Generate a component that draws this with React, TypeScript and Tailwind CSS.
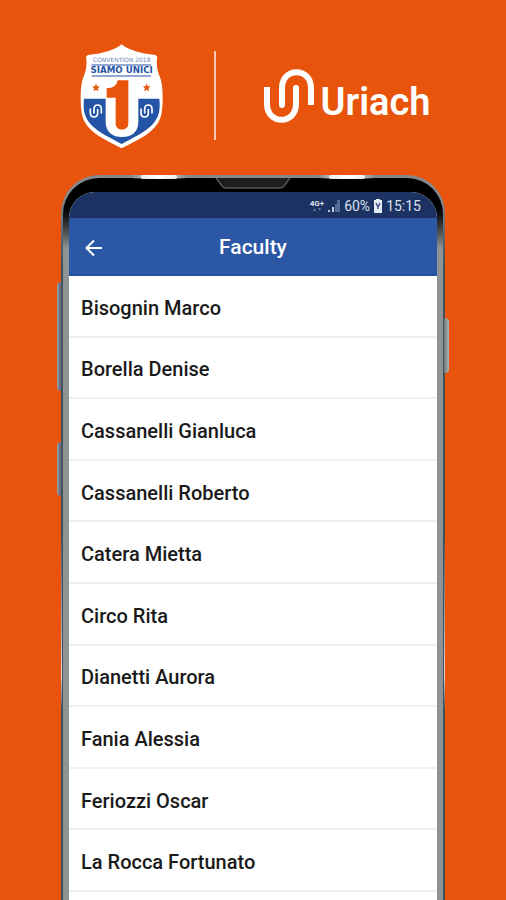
import React from 'react';

const faculty = [
  'Bisognin Marco',
  'Borella Denise',
  'Cassanelli Gianluca',
  'Cassanelli Roberto',
  'Catera Mietta',
  'Circo Rita',
  'Dianetti Aurora',
  'Fania Alessia',
  'Feriozzi Oscar',
  'La Rocca Fortunato',
];

function ConventionShield() {
  return (
    <svg width="84" height="105" viewBox="33 22 252 315" role="img" aria-label="Convention 2018 Siamo Unici">
      {/* White outline */}
      <path
        d="M158 26 C176 42 212 54 260 58 L265 64 C260 88 266 108 275 130 C283 156 282 206 278 232 C268 288 214 308 158 338 C102 308 48 288 38 232 C34 206 33 156 41 130 C50 108 56 88 51 64 L56 58 C104 54 140 42 158 26 Z"
        fill="#fff"
      />
      {/* Blue lower half */}
      <path d="M45 189 H271 C273 206 272 220 270 230 C260 276 212 296 158 325 C104 296 56 276 46 230 C44 220 43 206 45 189 Z" fill="#2454a6" />
      {/* White U around the number */}
      <path d="M110 186 V258 C110 290 132 304 159 304 C186 304 208 290 208 258 V186 Z" fill="#fff" />
      <path d="M146 134 H178 V264 C178 287 140 287 140 264 V186 H113 V158 C132 158 143 150 146 134 Z" fill="#e9540d" />
      <text x="158" y="79" textAnchor="middle" fontSize="18" fontFamily="DejaVu Sans, sans-serif" fill="#7186b5">CONVENTION 2018</text>
      <text x="158" y="112" textAnchor="middle" fontSize="26" fontWeight="700" fontFamily="DejaVu Sans, sans-serif" fill="#2454a6">SIAMO UNICI</text>
      <path d="M68 88 H246 M68 121 H246" stroke="#6f8cc2" strokeWidth="4" />
      <path d="M81 143 L84 152 L93 152 L86 158 L89 167 L81 162 L73 167 L76 158 L69 152 L78 152 Z" fill="#e9540d" />
      <path d="M233 143 L236 152 L245 152 L238 158 L241 167 L233 162 L225 167 L228 158 L221 152 L230 152 Z" fill="#e9540d" />
      <g fill="none" stroke="#fff" strokeWidth="5" strokeLinecap="round">
        <path d="M64 220 V232 C64 248 86 248 86 232 V222 M75 232 V220 C75 204 97 204 97 220 V232" />
        <path d="M216 220 V232 C216 248 238 248 238 232 V222 M227 232 V220 C227 204 249 204 249 220 V232" />
      </g>
    </svg>
  );
}

function UriachLogo() {
  return (
    <div className="flex items-center gap-[6px] text-white">
      <svg width="51" height="54" viewBox="0 0 51 54" fill="none" stroke="#fff" strokeWidth="6" aria-hidden="true">
        <path d="M3 18 V35 C3 56 32 56 32 35 V20" />
        <path d="M32 20 V19" strokeLinecap="round" />
        <path d="M18 36 V19 C18 -2 47 -2 47 19 V36" />
        <path d="M18 34 V36" strokeLinecap="round" />
      </svg>
      <span className="pt-3 text-[38px] leading-[46px] font-semibold">Uriach</span>
    </div>
  );
}

function StatusBar() {
  return (
    <div className="flex h-[26px] items-center justify-end gap-[3px] bg-[#1b3263] pt-[2px] pr-4 text-sm text-[#dbe1ec]">
      <div className="flex flex-col items-center text-[8px] leading-[8px] font-bold">
        4G+
        <svg width="8" height="4" viewBox="0 0 8 4" fill="#66799f" aria-hidden="true">
          <path d="M0 3 L1.5 0 L3 3 Z M5 0 H8 L6.5 3 Z" />
        </svg>
      </div>
      <svg width="14" height="14" viewBox="0 0 14 14" aria-hidden="true">
        <path d="M1 11 H3 V13 H1 Z M5 8 H7 V13 H5 Z" fill="#c4cddd" />
        <path d="M8 5 H10 V13 H8 Z M10 1 H13 V13 H10 Z" fill="#566c98" />
      </svg>
      <span>60%</span>
      <svg width="10" height="14" viewBox="0 0 10 14" aria-hidden="true">
        <path d="M3 0 H7 V1 H9 V14 H1 V1 H3 Z" fill="#e6eaf2" />
        <path d="M3 4 L5 8 L7 4 M5 7 V10" fill="none" stroke="#3b4f7b" strokeWidth="1.4" />
      </svg>
      <span>15:15</span>
    </div>
  );
}

export default function App() {
  return (
    <main className="flex h-screen flex-col overflow-hidden bg-[#e9540d] font-['Roboto',sans-serif]">
      {/* Brand header */}
      <header className="flex shrink-0 items-center justify-center pt-[43px] pb-[27px] pl-1">
        <ConventionShield />
        <div className="mr-12 ml-[50px] h-[89px] w-[2px] bg-[#f9c9b0]" />
        <UriachLogo />
      </header>

      {/* Phone */}
      <div className="relative mx-[61px] flex-1">
        {/* Side buttons */}
        <div className="absolute top-[107px] -left-1 h-[109px] w-[5px] rounded-l-sm bg-linear-to-r from-[#9aa2ad] to-[#475060]" />
        <div className="absolute top-[267px] -left-1 h-[54px] w-[5px] rounded-l-sm bg-linear-to-r from-[#9aa2ad] to-[#475060]" />
        <div className="absolute top-[143px] -right-1 h-[55px] w-[5px] rounded-r-sm bg-linear-to-l from-[#b0b4b5] to-[#69777c]" />

        <div className="h-full rounded-t-[38px] bg-linear-to-b from-[#85898c] from-[20px] to-[#454f58] to-[90px] px-[2px] pt-[3px]">
          <div className="h-full rounded-t-[36px] bg-linear-to-b from-black from-[24px] to-[#8e9496] to-[70px] px-[6px] pt-[14px]">
            {/* Screen */}
            <div className="h-full overflow-hidden rounded-t-[26px] bg-white">
              <StatusBar />
              <div className="grid h-[58px] grid-cols-[48px_1fr_48px] items-center border-b-2 border-[#2450a0] bg-[#2b57a5] pt-[3px] text-white">
                <button type="button" aria-label="Back" className="flex h-full items-center pl-4">
                  <svg width="18" height="18" viewBox="0 0 18 18" fill="none" stroke="#fff" strokeWidth="2" aria-hidden="true">
                    <path d="M17 9 H2 M9 1.5 L1.5 9 L9 16.5" />
                  </svg>
                </button>
                <h1 className="text-center text-[21px] font-medium">Faculty</h1>
              </div>
              <ul className="grid h-[616px] auto-rows-fr">
                {faculty.map((name) => (
                  <li key={name} className="flex items-center border-b-2 border-[#f0f0f0] pt-1 pl-3 text-xl font-medium text-[#1a1a1a]">
                    {name}
                  </li>
                ))}
              </ul>
            </div>
          </div>
        </div>

        {/* Light reflections on the rim */}
        <div className="absolute top-0 left-[70px] h-1 w-[56px] bg-linear-to-r from-transparent via-white via-50% to-transparent" />
        <div className="absolute top-0 left-[80px] h-1 w-9 rounded-full bg-white/80" />
        <div className="absolute top-0 right-[70px] h-1 w-[56px] bg-linear-to-r from-transparent via-white via-50% to-transparent" />
        <div className="absolute top-0 right-[80px] h-1 w-9 rounded-full bg-white/80" />
        <div className="absolute top-[360px] left-0 h-[175px] w-px bg-linear-to-b from-transparent via-[#e8d8d2] via-80% to-transparent" />
        <div className="absolute top-[360px] right-0 h-[175px] w-px bg-linear-to-b from-transparent via-[#e8d8d2] via-80% to-transparent" />

        {/* Earpiece */}
        <svg className="absolute top-[3px] left-1/2 -translate-x-1/2" width="76" height="11" viewBox="0 0 76 11" aria-hidden="true">
          <path d="M1 0 L7 8 Q8 10 11 10 H65 Q68 10 69 8 L75 0" fill="#1e1e1e" stroke="#55585a" strokeWidth="1.5" />
        </svg>
      </div>
    </main>
  );
}
